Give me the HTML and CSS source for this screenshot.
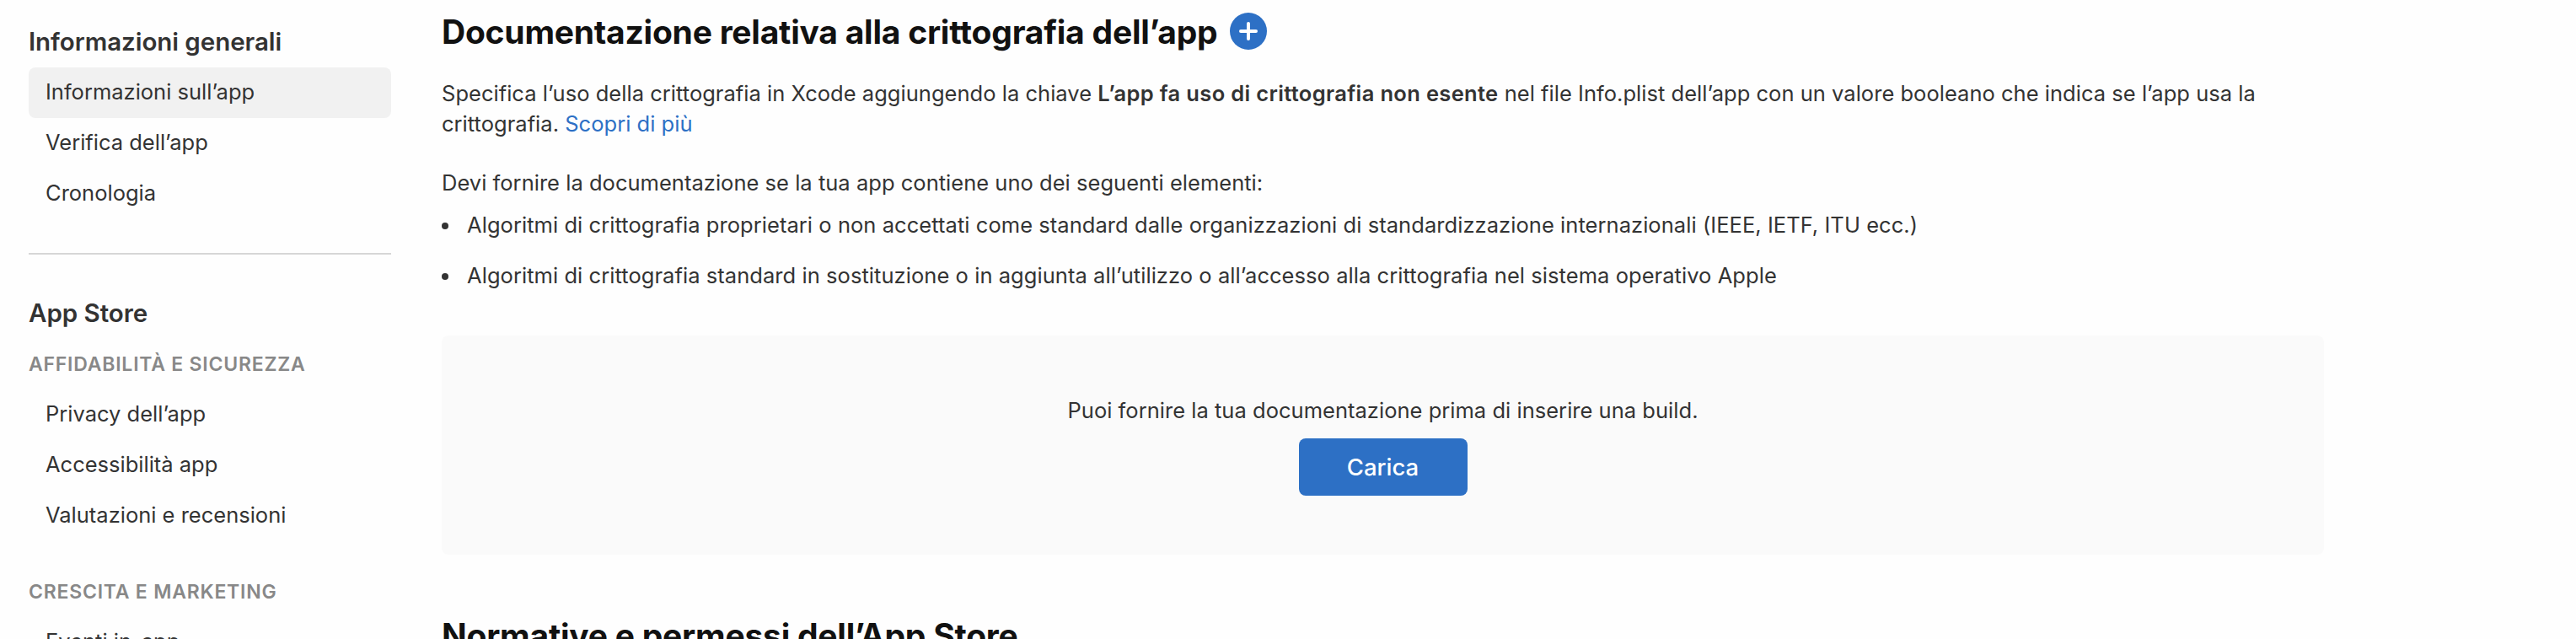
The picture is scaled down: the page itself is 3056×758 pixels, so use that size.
FILE: index.html
```html
<!DOCTYPE html>
<html lang="it">
<head>
<meta charset="utf-8">
<title>Informazioni sull’app</title>
<link rel="stylesheet" href="styles.css">
</head>
<body>
<div class="page">
  <nav class="sidebar">
    <h3 class="nav-title">Informazioni generali</h3>
    <a class="nav-item active">Informazioni sull’app</a>
    <a class="nav-item">Verifica dell’app</a>
    <a class="nav-item">Cronologia</a>
    <div class="divider"></div>
    <h3 class="nav-title">App Store</h3>
    <h4 class="nav-group first">AFFIDABILITÀ E SICUREZZA</h4>
    <a class="nav-item">Privacy dell’app</a>
    <a class="nav-item">Accessibilità app</a>
    <a class="nav-item">Valutazioni e recensioni</a>
    <h4 class="nav-group">CRESCITA E MARKETING</h4>
    <a class="nav-item">Eventi in-app</a>
  </nav>
  <main class="content">
    <div class="heading">
      <h2 class="title">Documentazione relativa alla crittografia dell’app</h2>
      <svg class="add" viewBox="0 0 44 44"><circle cx="22" cy="22" r="22" fill="#2d70c5"/><path d="M22 13V31M13 22H31" stroke="#fff" stroke-width="4" stroke-linecap="round"/></svg>
    </div>
    <p class="text intro">Specifica l’uso della crittografia in Xcode aggiungendo la chiave <b>L’app fa uso di crittografia non esente</b> nel file Info.plist dell’app con un valore booleano che indica se l’app usa la<br>crittografia. <a class="link">Scopri di più</a></p>
    <p class="text lead">Devi fornire la documentazione se la tua app contiene uno dei seguenti elementi:</p>
    <ul class="list">
      <li class="text">Algoritmi di crittografia proprietari o non accettati come standard dalle organizzazioni di standardizzazione internazionali (IEEE, IETF, ITU ecc.)</li>
      <li class="text">Algoritmi di crittografia standard in sostituzione o in aggiunta all’utilizzo o all’accesso alla crittografia nel sistema operativo Apple</li>
    </ul>
    <section class="panel">
      <p class="text">Puoi fornire la tua documentazione prima di inserire una build.</p>
      <button class="button">Carica</button>
    </section>
    <h2 class="title next">Normative e permessi dell’App Store</h2>
  </main>
</div>
</body>
</html>
```

FILE: styles.css
```css
* { box-sizing: border-box; margin: 0; padding: 0; }
html, body { height: 100%; overflow: hidden; }
body {
  background: #fefefe;
  color: #333;
  font-family: Inter, "Liberation Sans", sans-serif;
  font-size: 25.5px;
}
.page { display: flex; height: 758px; overflow: hidden; }
.sidebar { display: flex; flex-direction: column; width: 430px; margin: 29px 60px 0 34px; flex: none; }
.nav-title { font-size: 29.5px; font-weight: 600; line-height: 40px; margin-bottom: 11px; letter-spacing: -0.05px; white-space: nowrap; }
.nav-item { height: 60px; flex: none; line-height: 58px; padding-left: 20px; border-radius: 8px; white-space: nowrap; }
.active { background: #f1f1f1; }
.divider { height: 2px; flex: none; background: #d6d6d6; margin: 40px 0 49px; }
.nav-group { font-size: 23px; font-weight: 600; line-height: 40px; color: #888; margin: 40px 0 10px; letter-spacing: 0.78px; white-space: nowrap; }
.nav-group.first { margin-top: 10px; }
.content { width: 2233px; flex: none; padding-top: 13px; }
.heading { display: flex; align-items: flex-start; gap: 15px; }
.title { font-size: 39px; font-weight: 700; line-height: 50px; color: #111; letter-spacing: -0.23px; white-space: nowrap; }
.add { width: 44px; height: 44px; margin-top: 2px; }
.text { line-height: 36px; letter-spacing: 0.025px; white-space: nowrap; }
.text b { font-weight: 600; letter-spacing: 0.34px; }
.intro { margin-top: 30px; }
.link { color: #2d70c5; }
.lead { margin-top: 34px; }
.list { list-style: none; margin-top: 14px; display: flex; flex-direction: column; gap: 24px; }
.list li { display: flex; align-items: center; letter-spacing: 0.055px; }
.list li::before { content: ""; width: 8px; height: 8px; border-radius: 50%; background: #333; margin-right: 22px; margin-top: 2px; }
.panel { margin-top: 53px; height: 260px; padding-top: 71px; background: #fafafa; border-radius: 8px; display: flex; flex-direction: column; align-items: center; }
.button { margin-top: 15px; width: 200px; height: 68px; border: 0; border-radius: 8px; background: #2d70c5; color: #fff; font: 500 27.5px/68px Inter, "Liberation Sans", sans-serif; }
.next { margin-top: 71px; }
```
